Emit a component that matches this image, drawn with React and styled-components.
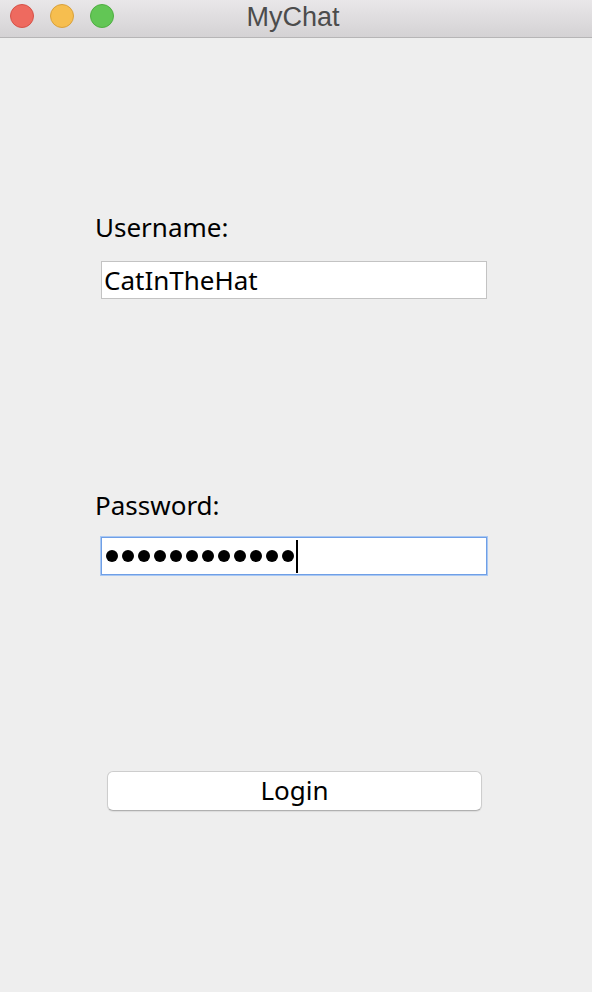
import React from "react";
import styled, { createGlobalStyle } from "styled-components";

const GlobalStyle = createGlobalStyle`
  html, body {
    margin: 0;
    padding: 0;
    background: #eeeeee;
  }
  * {
    box-sizing: border-box;
  }
`;

const Window = styled.div`
  width: 592px;
  height: 992px;
  display: flex;
  flex-direction: column;
  background: #eeeeee;
  font-family: "Noto Sans", "DejaVu Sans", sans-serif;
  color: #000;
  overflow: hidden;
`;

const TitleBar = styled.div`
  position: relative;
  height: 38px;
  flex: none;
  display: flex;
  align-items: center;
  justify-content: center;
  background: linear-gradient(#e9e7e9, #d4d2d4);
  border-bottom: 1px solid #b6b5b6;
`;

const Lights = styled.div`
  position: absolute;
  left: 10px;
  top: 4px;
  display: flex;
  gap: 16px;
`;

const Light = styled.span`
  width: 24px;
  height: 24px;
  border-radius: 50%;
  background: ${p => p.$fill};
  border: 1px solid ${p => p.$edge};
`;

const Title = styled.div`
  font-family: "Liberation Sans", "Helvetica", sans-serif;
  font-size: 27px;
  color: #4c4c4c;
  margin: -3px 6px 0 0;
`;

const Form = styled.div`
  display: flex;
  flex-direction: column;
  padding: 0 0 0 95px;
`;

const Label = styled.div`
  font-size: 26px;
  line-height: 30px;
  margin-top: ${p => p.$top}px;
`;

const Field = styled.div`
  width: 386px;
  height: 38px;
  margin: ${p => p.$top}px 0 0 6px;
  background: #fff;
  display: flex;
  align-items: center;
  padding-left: 2px;
  font-size: 26px;
  border: 1px solid ${p => (p.$focused ? "#6f9fe6" : "#c3c3c3")};
  box-shadow: ${p => (p.$focused ? "0 0 0 1px #a9c8f3" : "none")};
`;

const Dots = styled.div`
  display: flex;
  align-items: center;
  gap: 4px;
  padding-left: 2px;
`;

const Dot = styled.span`
  width: 12px;
  height: 12px;
  border-radius: 50%;
  background: #000;
`;

const Caret = styled.span`
  width: 2px;
  height: 33px;
  background: #000;
  margin-left: 2px;
`;

const LoginButton = styled.button`
  width: 375px;
  height: 40px;
  margin: ${p => p.$top}px 0 0 12px;
  background: #fff;
  border: 1px solid #cdcdcd;
  border-bottom-color: #b0b0b0;
  border-radius: 6px;
  box-shadow: 0 1px 1px rgba(0, 0, 0, 0.08);
  font-family: "Noto Sans", "DejaVu Sans", sans-serif;
  font-size: 26px;
  color: #000;
  padding: 0 0 2px;
`;

export default function App() {
  const dots = Array.from({ length: 12 });
  return (
    <Window>
      <GlobalStyle />
      <TitleBar>
        <Lights>
          <Light $fill="#ee6a5f" $edge="#d65248" />
          <Light $fill="#f6be4f" $edge="#d9a13c" />
          <Light $fill="#62c655" $edge="#4fae42" />
        </Lights>
        <Title>MyChat</Title>
      </TitleBar>
      <Form>
        <Label $top={174}>Username:</Label>
        <Field $top={19}>CatInTheHat</Field>
        <Label $top={191}>Password:</Label>
        <Field $top={17} $focused>
          <Dots>
            {dots.map((_, i) => (
              <Dot key={i} />
            ))}
          </Dots>
          <Caret />
        </Field>
        <LoginButton $top={196}>Login</LoginButton>
      </Form>
    </Window>
  );
}
